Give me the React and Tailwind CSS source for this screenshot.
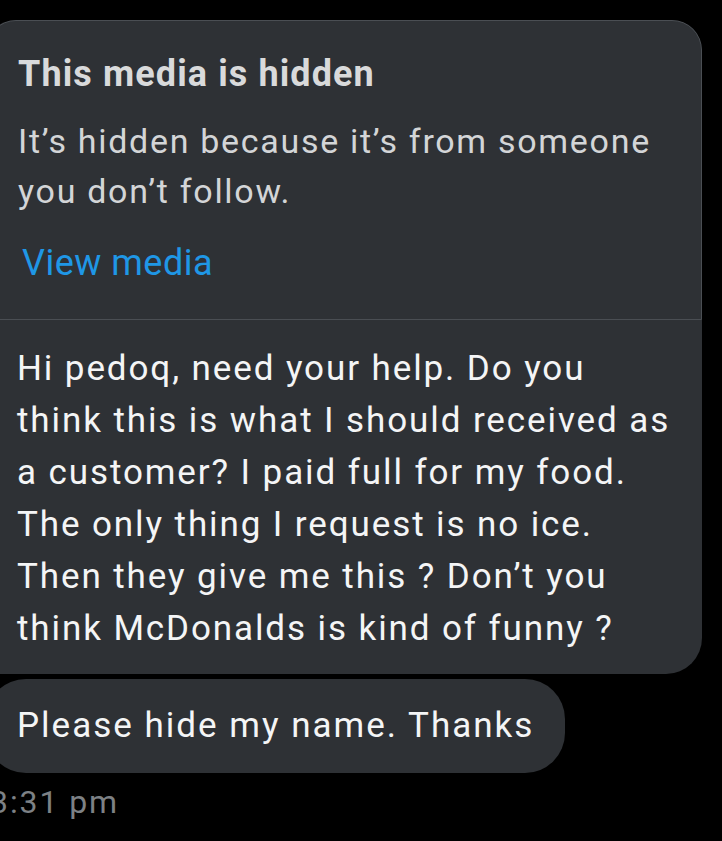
import React from "react";

const messageLines = [
  "Hi pedoq, need your help. Do you",
  "think this is what I should received as",
  "a customer? I paid full for my food.",
  "The only thing I request is no ice.",
  "Then they give me this ? Don’t you",
  "think McDonalds is kind of funny ?",
];

const App = () => {
  return (
    <div
      className="w-[722px] h-[841px] bg-black overflow-hidden flex flex-col items-start pt-[20px]"
      style={{ fontFamily: 'Roboto, "Liberation Sans", Arial, sans-serif' }}
    >
      {/* received message with hidden media */}
      <div className="-ml-[14px] w-[716px] bg-[#2e3135] rounded-tl-[30px] rounded-tr-[30px] rounded-br-[36px] overflow-hidden">
        <div className="border-[1.5px] border-[#4a4e53] rounded-tl-[30px] rounded-tr-[30px] pl-[31px] pt-[31px] pb-[34px]">
          <div className="text-[36px] leading-[44px] font-bold tracking-[1.1px] text-[#d9dadb]">
            This media is hidden
          </div>
          <div className="mt-[20px] text-[34px] leading-[50px] tracking-[1.7px] text-[#d3d5d7]">
            It’s hidden because it’s from someone
            <br />
            you don’t follow.
          </div>
          <button className="mt-[25px] ml-[4px] text-[36px] leading-[44px] tracking-[0.5px] text-[#1f97e6]">
            View media
          </button>
        </div>
        <div className="pl-[31px] pt-[23px] pb-[19px] text-[35px] leading-[52px] tracking-[1.9px] text-[#f4f5f6]">
          {messageLines.map((line, i) => (
            <div key={i} className="whitespace-nowrap">
              {line}
            </div>
          ))}
        </div>
      </div>

      <div className="-ml-[14px] mt-[5px] bg-[#2e3135] rounded-[40px] pl-[31px] pr-[31px] py-[21px] text-[35px] leading-[52px] tracking-[2px] text-[#f4f5f6] whitespace-nowrap">
        Please hide my name. Thanks
      </div>

      <div className="-ml-[10px] mt-[9px] text-[32px] leading-[40px] tracking-[1.9px] text-[#7d8185]">
        3:31 pm
      </div>
    </div>
  );
};

export default App;
